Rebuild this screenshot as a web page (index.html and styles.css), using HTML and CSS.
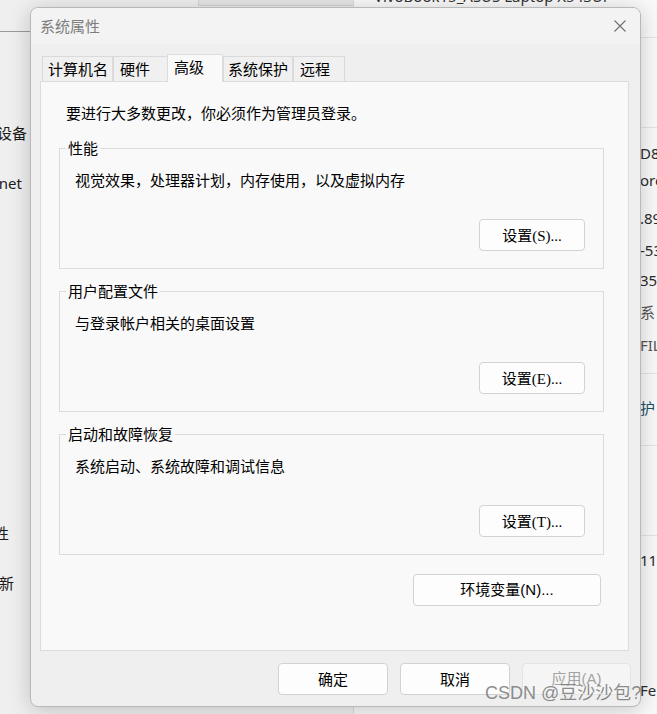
FILE: index.html
```html
<!DOCTYPE html>
<html lang="zh-CN">
<head>
<meta charset="utf-8">
<title>系统属性</title>
<link rel="stylesheet" href="styles.css">
</head>
<body>
<div class="desk">
  <div class="win-left"></div>
  <div class="win-mid"></div>
  <div class="win-right">
    <span class="vivo">VivoBook15_ASUS Laptop X543UF</span>
  </div>
  <div class="hline l1"></div>
  <div class="rline r1"></div>
  <div class="rline r2"></div>
  <div class="rline r3"></div>
  <div class="rline r4"></div>
  <div class="rline r5"></div>
  <span class="ltxt a1">设备</span>
  <span class="ltxt a2">Ethernet</span>
  <span class="ltxt a3">属性</span>
  <span class="ltxt a4">更新</span>
  <span class="rtxt b1">D8</span>
  <span class="rtxt b2">ore</span>
  <span class="rtxt b3">.89</span>
  <span class="rtxt b4">-53</span>
  <span class="rtxt b5">358</span>
  <span class="rtxt b6 soft">系</span>
  <span class="rtxt b7 soft">FIL</span>
  <span class="rtxt b8 teal">护</span>
  <span class="rtxt b9">11</span>
  <span class="rtxt b10">Fe</span>
</div>

<div class="dialog">
  <div class="titlebar">
    <span class="title">系统属性</span>
    <svg class="close" viewBox="0 0 12 12" aria-hidden="true"><path d="M0.5 0.5 L11.5 11.5 M11.5 0.5 L0.5 11.5" stroke="#707070" stroke-width="1.1" fill="none"/></svg>
  </div>
  <div class="body">
    <div class="tabs">
      <div class="tab t1">计算机名</div>
      <div class="tab t2">硬件</div>
      <div class="tab t3 sel">高级</div>
      <div class="tab t4">系统保护</div>
      <div class="tab t5">远程</div>
    </div>
    <div class="pane">
      <p class="note">要进行大多数更改，你必须作为管理员登录。</p>
      <div class="group first">
        <span class="legend">性能</span>
        <p class="desc">视觉效果，处理器计划，内存使用，以及虚拟内存</p>
        <button class="btn set">设置<span class="serif">(S)...</span></button>
      </div>
      <div class="group">
        <span class="legend">用户配置文件</span>
        <p class="desc">与登录帐户相关的桌面设置</p>
        <button class="btn set">设置<span class="serif">(E)...</span></button>
      </div>
      <div class="group">
        <span class="legend">启动和故障恢复</span>
        <p class="desc">系统启动、系统故障和调试信息</p>
        <button class="btn set">设置<span class="serif">(T)...</span></button>
      </div>
      <button class="btn env">环境变量(N)...</button>
    </div>
    <div class="actions">
      <button class="btn act">确定</button>
      <button class="btn act">取消</button>
      <button class="btn act disabled">应用(A)</button>
    </div>
  </div>
</div>

<div class="watermark">CSDN @豆沙沙包?</div>
</body>
</html>
```

FILE: styles.css
```css
* { box-sizing: border-box; }

body {
  margin: 0;
  width: 657px;
  height: 714px;
  overflow: hidden;
  position: relative;
  background: #efefef;
  font-family: "Noto Sans CJK SC", "Noto Sans", sans-serif;
  color: #000;
}

/* ---------- desktop behind the dialog ---------- */
.desk { position: absolute; inset: 0; overflow: hidden; }
.win-left { position: absolute; left: 0; top: 0; width: 198px; height: 714px; background: #efefef; }
.win-mid { position: absolute; left: 198px; top: 0; width: 155px; height: 6px; background: #e6e6e6; border-bottom: 1px solid #cfcfcf; border-left: 1px solid #d6d6d6; }
.win-right { position: absolute; left: 353px; top: 0; right: 0; bottom: 0; background: #f9f9f9; border-left: 1px solid #dcdcdc; }
.vivo { position: absolute; left: 20px; top: -14px; font-family: "Noto Sans", sans-serif; font-size: 15px; line-height: 20px; color: #333; white-space: nowrap; }
.hline { position: absolute; height: 1px; background: #9a9a9a; }
.l1 { left: 0; top: 31px; width: 120px; }
.rline { position: absolute; left: 600px; right: 0; height: 1px; background: #e3e3e3; }
.r1 { top: 37px; } .r2 { top: 127px; } .r3 { top: 373px; } .r4 { top: 445px; } .r5 { top: 535px; }

.ltxt { position: absolute; font-size: 15px; line-height: 20px; color: #1b1b1b; white-space: nowrap; text-align: right; width: 90px; }
.a1 { left: -63px; top: 123px; }
.a2 { left: -68px; top: 173px; font-family: "Noto Sans", sans-serif; }
.a3 { left: -81px; top: 523px; }
.a4 { left: -76px; top: 573px; }

.rtxt { position: absolute; left: 640px; font-family: "Noto Sans", "Noto Sans CJK SC", sans-serif; font-size: 15px; line-height: 20px; color: #2b2b2b; white-space: nowrap; }
.b1 { top: 143px; } .b2 { top: 170px; } .b3 { top: 208px; } .b4 { top: 240px; } .b5 { top: 270px; }
.b6 { top: 302px; } .b7 { top: 335px; } .b8 { top: 398px; } .b9 { top: 550px; } .b10 { top: 680px; }
.soft { color: #555; }
.teal { color: #1f4f66; }

/* ---------- dialog ---------- */
.dialog {
  position: absolute;
  left: 30px;
  top: 7px;
  width: 611px;
  height: 700px;
  background: #efefef;
  border: 1px solid #b8b8b8;
  border-radius: 8px;
  box-shadow: 0 3px 22px rgba(0, 0, 0, 0.2);
  display: flex;
  flex-direction: column;
  overflow: hidden;
}

.titlebar {
  height: 36px;
  flex: none;
  background: #f3f3f3;
  display: flex;
  align-items: center;
  justify-content: space-between;
  padding: 0 14px 0 9px;
}
.title { font-size: 15px; line-height: 20px; color: #7d7d7d; }
.close { width: 12px; height: 12px; display: block; }

.body {
  flex: 1;
  display: flex;
  flex-direction: column;
  padding: 10px 11px 0 9px;
}

.tabs {
  display: flex;
  align-items: flex-end;
  height: 27px;
  padding-left: 2px;
  position: relative;
  z-index: 1;
}
.tab {
  height: 25px;
  border: 1px solid #dadada;
  border-bottom: none;
  background: #f0f0f0;
  font-size: 15px;
  line-height: 22px;
  padding-top: 1px;
  white-space: nowrap;
}
.t1 { width: 71px; padding-left: 5px; }
.t2 { width: 56px; padding-left: 6px; }
.t3 { width: 56px; padding-left: 6px; margin-left: -2px; }
.t4 { width: 70px; padding-left: 4px; }
.t5 { width: 52px; padding-left: 6px; }
.tab.sel {
  height: 28px;
  margin-bottom: -1px;
  background: #f9f9f9;
  line-height: 24px;
  padding-top: 0;
  border-color: #dcdcdc;
}

.pane {
  height: 570px;
  flex: none;
  border: 1px solid #dcdcdc;
  background: #f9f9f9;
  padding: 21px 24px 0 18px;
  display: flex;
  flex-direction: column;
}
.note { margin: 0 0 0 7px; font-size: 15px; line-height: 20px; }

.group {
  position: relative;
  height: 121px;
  flex: none;
  margin-top: 22px;
  border: 1px solid #dcdcdc;
  padding: 21px 18px 0 15px;
  display: flex;
  flex-direction: column;
}
.group.first { margin-top: 25px; }
.legend {
  position: absolute;
  left: 6px;
  top: -11px;
  padding: 0 2px;
  background: #f9f9f9;
  font-size: 15px;
  line-height: 20px;
}
.desc { margin: 0; font-size: 15px; line-height: 20px; }

.btn {
  font-family: "Noto Sans CJK SC", "Noto Sans", sans-serif;
  font-size: 15px;
  line-height: 20px;
  color: #000;
  background: #fdfdfd;
  border: 1px solid #d2d2d2;
  border-radius: 4px;
  padding: 0;
  height: 32px;
}
.serif { font-family: "Liberation Serif", serif; }
.set { align-self: flex-end; width: 106px; margin-top: 29px; }
.env { align-self: flex-end; width: 188px; margin: 19px 3px 0 0; font-family: "Liberation Sans", "Noto Sans CJK SC", sans-serif; }

.actions {
  display: flex;
  justify-content: flex-end;
  gap: 12px;
  margin: 12px -2px 0 0;
}
.act { width: 110px; }
.act.disabled {
  width: 109px;
  background: #f5f5f5;
  border-color: #e4e4e4;
  color: #a3a3a3;
  font-family: "Liberation Sans", "Noto Sans CJK SC", sans-serif;
}

.watermark {
  position: absolute;
  left: 485px;
  top: 681px;
  font-family: "Liberation Sans", "Noto Sans CJK SC", sans-serif;
  font-size: 18px;
  line-height: 24px;
  color: rgba(120, 120, 120, 0.85);
  white-space: nowrap;
}
```
